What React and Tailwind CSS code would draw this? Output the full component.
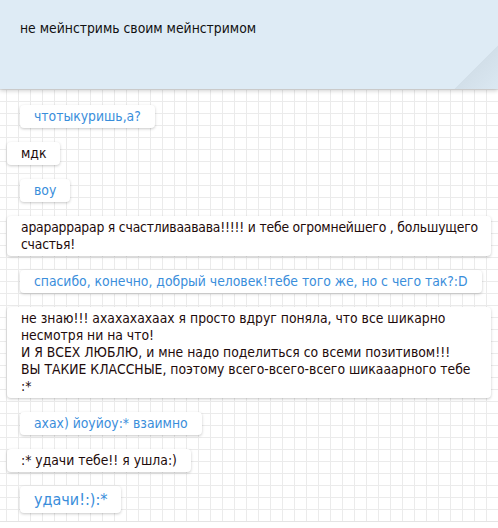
import React from "react";

const messages = [
  { out: true, text: "чтотыкуришь,а?" },
  { out: false, text: "мдк" },
  { out: true, text: "воу" },
  {
    out: false,
    tight: true,
    lines: [
      "арараррарар я счастливаавава!!!!! и тебе огромнейшего , большущего",
      "счастья!",
    ],
  },
  { out: true, text: "спасибо, конечно, добрый человек!тебе того же, но с чего так?:D" },
  {
    out: false,
    lines: [
      "не знаю!!! ахахахахаах я просто вдруг поняла, что все шикарно",
      "несмотря ни на что!",
      "И Я ВСЕХ ЛЮБЛЮ, и мне надо поделиться со всеми позитивом!!!",
      "ВЫ ТАКИЕ КЛАССНЫЕ, поэтому всего-всего-всего шикааарного тебе",
      ":*",
    ],
  },
  { out: true, text: "ахах) йоуйоу:* взаимно" },
  { out: false, text: ":* удачи тебе!! я ушла:)" },
  { out: true, big: true, text: "удачи!:):*" },
];

function Bubble({ msg }) {
  const base =
    "bg-white rounded-[4px] shadow-[0_1px_3px_rgba(0,0,0,0.22)] py-[3px] leading-[17px]";
  if (msg.lines) {
    return (
      <div className={`${base} mx-[7px] px-[14px] text-[#1e0b0b] whitespace-nowrap`}>
        {msg.lines.map((l, i) => (
          <div key={i} className={msg.tight ? "tracking-[-0.2px]" : ""}>
            {l}
          </div>
        ))}
      </div>
    );
  }
  return (
    <div
      className={`${base} px-[14px] self-start whitespace-nowrap ${
        msg.out ? "ml-[20px] text-[#3a8edb]" : "ml-[7px] text-[#1e0b0b]"
      } ${msg.big ? "text-[16px] leading-[21px]" : ""}`}
    >
      {msg.text}
    </div>
  );
}

export default function App() {
  return (
    <div
      className="w-[498px] h-[528px] bg-white overflow-hidden text-[13.8px]"
      style={{ fontFamily: '"DejaVu Sans Condensed", "DejaVu Sans", sans-serif' }}
    >
      <div className="h-[522px] border-b border-[#e4e4e4] flex flex-col bg-white bg-[linear-gradient(to_right,#ebebeb_1px,transparent_1px),linear-gradient(to_bottom,#ebebeb_1px,transparent_1px)] bg-[size:12px_12px] bg-[position:6px_5px]">
        <div className="h-[89px] shrink-0 px-[20px] pt-[20px] leading-[17px] text-[#111] bg-[#deebf5] bg-[linear-gradient(135deg,#deebf5_92.5%,#d2dfe9_92.6%,#dbe8f2_100%)] shadow-[0_2px_4px_rgba(0,0,0,0.18)]">
          не мейнстримь своим мейнстримом
        </div>
        <div className="flex flex-col gap-[14px] pt-[16px]">
          {messages.map((m, i) => (
            <Bubble key={i} msg={m} />
          ))}
        </div>
      </div>
    </div>
  );
}
